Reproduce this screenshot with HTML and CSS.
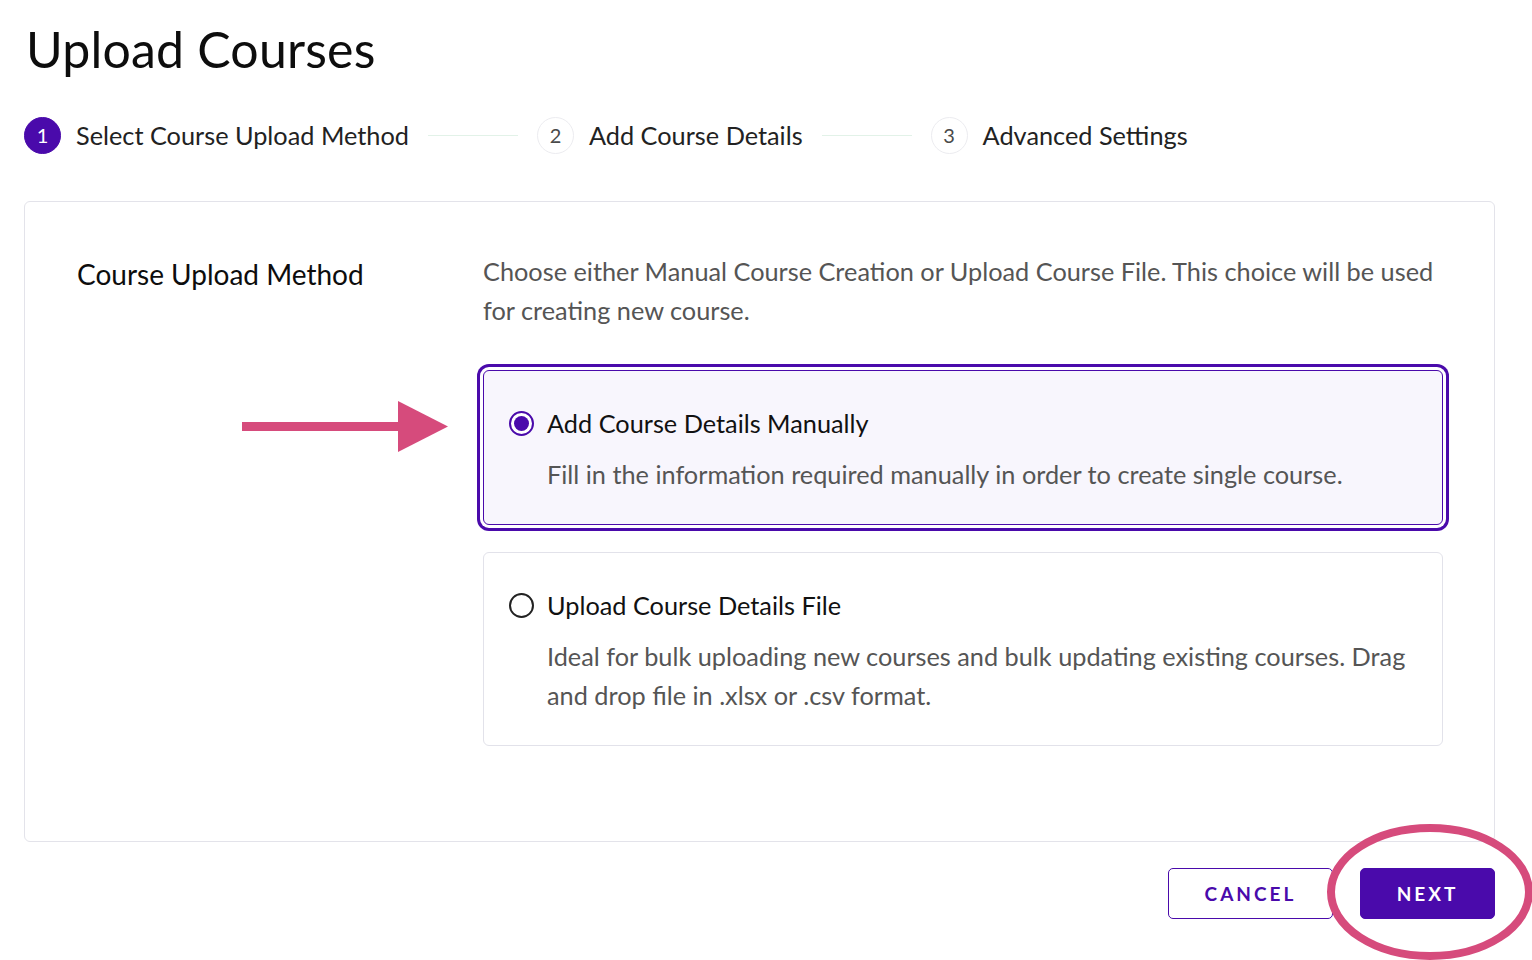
FILE: index.html
```html
<!DOCTYPE html>
<html lang="en">
<head>
<meta charset="utf-8">
<title>Upload Courses</title>
<link rel="stylesheet" href="styles.css">
</head>
<body>
<div class="page">
  <h1 class="title">Upload Courses</h1>

  <div class="stepper">
    <div class="step active">
      <span class="step-num">1</span>
      <span class="step-label">Select Course Upload Method</span>
    </div>
    <span class="step-line"></span>
    <div class="step">
      <span class="step-num">2</span>
      <span class="step-label">Add Course Details</span>
    </div>
    <span class="step-line"></span>
    <div class="step">
      <span class="step-num">3</span>
      <span class="step-label">Advanced Settings</span>
    </div>
  </div>

  <div class="panel">
    <div class="panel-left">
      <h2 class="section-title">Course Upload Method</h2>
      <svg class="arrow" width="210" height="52" viewBox="0 0 210 52" aria-hidden="true">
        <rect x="0" y="21" width="160" height="9" fill="#d64b7c"/>
        <polygon points="156,0 206,25.5 156,51" fill="#d64b7c"/>
      </svg>
    </div>
    <div class="panel-right">
      <p class="intro">Choose either Manual Course Creation or Upload Course File. This choice will be used for creating new course.</p>

      <label class="option selected">
        <span class="option-head">
          <span class="radio checked"></span>
          <span class="option-title">Add Course Details Manually</span>
        </span>
        <span class="option-desc">Fill in the information required manually in order to create single course.</span>
      </label>

      <label class="option">
        <span class="option-head">
          <span class="radio"></span>
          <span class="option-title">Upload Course Details File</span>
        </span>
        <span class="option-desc">Ideal for bulk uploading new courses and bulk updating existing courses. Drag and drop file in .xlsx or .csv format.</span>
      </label>
    </div>
  </div>

  <div class="actions">
    <button class="btn btn-outline">CANCEL</button>
    <div class="next-wrap">
      <button class="btn btn-primary">NEXT</button>
      <svg class="ring" width="210" height="140" viewBox="0 0 210 140" aria-hidden="true">
        <ellipse cx="105" cy="70" rx="99" ry="64" fill="none" stroke="#d64b7c" stroke-width="8"/>
      </svg>
    </div>
  </div>
</div>
</body>
</html>
```

FILE: styles.css
```css
* { box-sizing: border-box; }

html, body {
  margin: 0;
  padding: 0;
  background: #ffffff;
}

body {
  font-family: Lato, "Open Sans", "Liberation Sans", sans-serif;
  color: #1c1c1c;
  min-height: 960px;
}

.page {
  padding: 18px 37px 70px 24px;
}

.title {
  margin: 0 0 0 2px;
  font-size: 50px;
  font-weight: 400;
  line-height: 62px;
  color: #0d0d0d;
  letter-spacing: 0.2px;
}

.stepper {
  display: flex;
  align-items: center;
  margin-top: 36px;
  height: 38px;
}

.step {
  display: flex;
  align-items: center;
  gap: 15px;
}

.step-num {
  width: 37px;
  height: 37px;
  border-radius: 50%;
  border: 1px solid #ececf0;
  display: flex;
  align-items: center;
  justify-content: center;
  font-size: 20px;
  color: #4a4a4a;
}

.step.active .step-num {
  background: #4a0aab;
  border-color: #4a0aab;
  color: #ffffff;
}

.step-label {
  font-size: 25.3px;
  color: #222222;
}

.step-line {
  width: 90px;
  height: 1px;
  background: #e2f2e8;
  margin: 0 19px;
}

.panel {
  margin-top: 47px;
  border: 1px solid #e3e3ea;
  border-radius: 6px;
  height: 641px;
  display: flex;
  padding: 50px 51px 0 52px;
}

.panel-left {
  width: 406px;
  flex: none;
  display: flex;
  flex-direction: column;
}

.section-title {
  margin: 3px 0 0 0;
  font-size: 28px;
  font-weight: 400;
  line-height: 38px;
  color: #0d0d0d;
}

.arrow {
  margin: 108px 0 0 165px;
}

.panel-right {
  flex: 1;
  display: flex;
  flex-direction: column;
}

.intro {
  margin: 0 0 40px 0;
  font-size: 25.3px;
  line-height: 39px;
  color: #555555;
}

.option {
  display: flex;
  flex-direction: column;
  border: 1px solid #e2e2ea;
  border-radius: 6px;
  padding: 34px 24px 30px 25px;
  margin-bottom: 27px;
  cursor: pointer;
}

.option.selected {
  background: #f8f6fd;
  border-color: #4a0aab;
  box-shadow: 0 0 0 3px #ffffff, 0 0 0 6px #4a0aab;
  padding-bottom: 30px;
}

.option-head {
  display: flex;
  align-items: center;
  gap: 13px;
}

.radio {
  width: 25px;
  height: 25px;
  border-radius: 50%;
  border: 2px solid #222222;
  background: #ffffff;
  flex: none;
  position: relative;
}

.radio.checked {
  border-color: #4a0aab;
}

.radio.checked::after {
  content: "";
  position: absolute;
  left: 3px;
  top: 3px;
  width: 15px;
  height: 15px;
  border-radius: 50%;
  background: #4a0aab;
}

.option-title {
  font-size: 25.3px;
  line-height: 36px;
  color: #111111;
}

.option-desc {
  margin-top: 14px;
  padding-left: 38px;
  font-size: 25.3px;
  line-height: 39px;
  color: #555555;
}

.actions {
  display: flex;
  justify-content: flex-end;
  gap: 27px;
  margin-top: 26px;
}

.btn {
  height: 51px;
  border-radius: 5px;
  font-family: Lato, "Open Sans", "Liberation Sans", sans-serif;
  font-size: 19px;
  font-weight: 700;
  letter-spacing: 3px;
  cursor: pointer;
}

.btn-outline {
  width: 165px;
  background: #ffffff;
  border: 1px solid #4a0aab;
  color: #4a0aab;
}

.next-wrap {
  position: relative;
}

.btn-primary {
  width: 135px;
  background: #4a0aab;
  border: 1px solid #4a0aab;
  color: #ffffff;
}

.ring {
  position: absolute;
  left: -35px;
  top: -46px;
  pointer-events: none;
  overflow: visible;
}
```
